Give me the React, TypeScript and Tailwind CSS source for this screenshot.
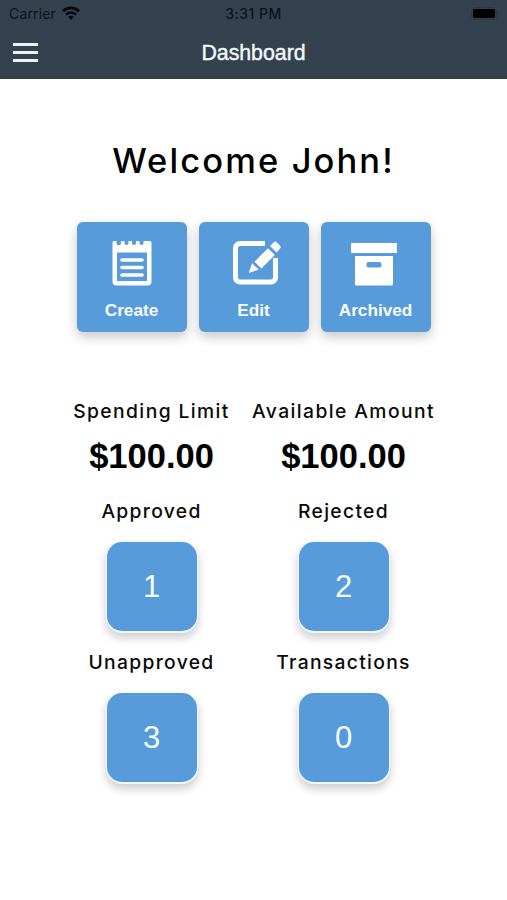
import type { ReactNode } from "react";

function StatusBar() {
  return (
    <div className="grid h-7 grid-cols-3 items-center font-['Inter',sans-serif] text-[14px] leading-7 text-[#0b131b]">
      <div className="flex items-center gap-[6px] pl-[9px]">
        <span className="tracking-[0.15px]">Carrier</span>
        <svg className="-mt-[2px]" width="18" height="14" viewBox="0 0 18 14" fill="none" stroke="#05090d" strokeWidth="2.6">
          <path d="M1 5.2a11.4 11.4 0 0 1 16 0" />
          <path d="M4 8.6a7.1 7.1 0 0 1 10 0" />
          <path d="M6.3 11.1a3.8 3.8 0 0 1 5.4 0L9 13.8z" fill="#05090d" stroke="none" />
        </svg>
      </div>
      <div className="text-center font-medium tracking-[0.45px]">3:31 PM</div>
      <div className="flex items-center justify-end pr-[8px]">
        <div className="-mt-[2px] h-[13px] w-[26px] rounded-[4px] border border-[#2b3843] p-px">
          <div className="h-full w-full rounded-[2px] bg-black" />
        </div>
        <div className="-mt-[2px] ml-px h-1 w-[1px] rounded-r bg-[#2b3843]" />
      </div>
    </div>
  );
}

function NavBar() {
  return (
    <div className="grid h-[51px] grid-cols-[60px_1fr_60px] items-center">
      <button aria-label="Menu" className="ml-[13px] -mt-[2px] flex w-[25px] flex-col gap-[5px]">
        <span className="h-[3px] bg-[#eff2f4]" />
        <span className="h-[3px] bg-[#eff2f4]" />
        <span className="h-[3px] bg-[#eff2f4]" />
      </button>
      <h1 className="text-center text-[21.3px] text-[#f3f8fc] [-webkit-text-stroke:0.4px_#f3f8fc]">Dashboard</h1>
    </div>
  );
}

function CreateIcon() {
  return (
    <svg width="40" height="46" viewBox="0 0 40 46" fill="white">
      <path
        fillRule="evenodd"
        d="M.5 2.500Q.5 1 2 1h2.500v2a2 2 0 0 0 4.500 0V1h3.500v2a2 2 0 0 0 4 0V1H20v2a2 2 0 0 0 4 0V1h3.500v2a2 2 0 0 0 4 0V1H37.500Q39.500 1 39.500 2.500V41.500a4 4 0 0 1-4 4h-31a4 4 0 0 1-4-4zM5 12.500v28.500h30V12.500z"
      />
      <path d="M10 20h20M10 27.500h20M10 35h20" stroke="white" strokeWidth="3.600" strokeLinecap="round" />
    </svg>
  );
}

function EditIcon() {
  return (
    <svg className="ml-[6px]" width="50" height="46" viewBox="0 0 50 46" fill="white">
      <path d="M33 3.500H8a4.500 4.500 0 0 0-4.500 4.500v30A4.500 4.500 0 0 0 8 42h31a4.500 4.500 0 0 0 4.500-4.500V18" fill="none" stroke="white" strokeWidth="5" />
      <path d="M40-1 13 32h14l22-25z" fill="#579bdb" />
      <path d="M16.800 33 20 23.300l6.700 6.200z" />
      <path d="m22.500 21.700 13.500-13.500 6.900 6.900L29.400 28.600z" />
      <path d="m38 6 3.800-3.800q1.400-1.400 2.800 0l3.500 3.500q1.400 1.400 0 2.800l-3.500 4z" />
    </svg>
  );
}

function ArchiveIcon() {
  return (
    <svg className="mr-[4px]" width="48" height="46" viewBox="0 0 48 46" fill="white">
      <rect x="1" y="3" width="46" height="10" rx="0.800" />
      <path
        fillRule="evenodd"
        d="M5 16h38v28a1.500 1.500 0 0 1-1.500 1.500h-35A1.500 1.500 0 0 1 5 44zM18.500 22a2 2 0 0 0-2 2v1.500a2 2 0 0 0 2 2h11a2 2 0 0 0 2-2V24a2 2 0 0 0-2-2z"
      />
    </svg>
  );
}

function ActionTile({ label, children }: { label: string; children: ReactNode }) {
  return (
    <button className="flex h-[110px] w-[110px] flex-col items-center rounded-[6px] bg-[#579bdb] pt-[18px] shadow-[0_5px_12px_rgba(0,0,0,0.22)]">
      <span className="flex h-[46px] items-center">{children}</span>
      <span className="mt-[13px] text-[17.2px] leading-[22px] font-bold text-[#f8fcff]">{label}</span>
    </button>
  );
}

function Label({ children, className = "" }: { children: ReactNode; className?: string }) {
  return (
    <div className={`font-['Inter',sans-serif] text-[19.3px] leading-6 font-medium whitespace-nowrap text-[#0a0a0a] ${className}`}>
      {children}
    </div>
  );
}

function Amount({ children }: { children: ReactNode }) {
  return <div className="mt-[13px] text-[34.5px] leading-10 font-bold text-black">{children}</div>;
}

function CountTile({ value }: { value: number }) {
  return (
    <div className="mt-[18px] flex h-[92px] w-[92px] items-center justify-center rounded-[16px] bg-[#f0f7fd] p-px pb-[2px] shadow-[0_5px_10px_rgba(0,0,0,0.2)]">
      <div className="flex h-full w-full items-center justify-center rounded-[15px] bg-[#579bdb] pt-px text-[31px] text-[#f5fbff]">
        {value}
      </div>
    </div>
  );
}

export default function App() {
  return (
    <div className="min-h-[900px] w-full bg-white font-['Liberation_Sans',Arial,sans-serif]">
      <header className="h-[79px] bg-[#34424f]">
        <StatusBar />
        <NavBar />
      </header>
      <main className="flex flex-col items-center">
        <h2 className="mt-[61px] font-['Inter',sans-serif] text-[34.5px] leading-[42px] font-medium tracking-[2.1px] whitespace-nowrap text-black">
          Welcome John!
        </h2>
        <div className="mt-[40px] flex gap-3">
          <ActionTile label="Create"><CreateIcon /></ActionTile>
          <ActionTile label="Edit"><EditIcon /></ActionTile>
          <ActionTile label="Archived"><ArchiveIcon /></ActionTile>
        </div>
        <div className="mt-[67px] mr-3 grid grid-cols-[192px_192px] justify-center">
          <section className="flex flex-col items-center">
            <Label className="tracking-[1.4px]">Spending Limit</Label>
            <Amount>$100.00</Amount>
            <Label className="mt-[23px] tracking-[1.3px]">Approved</Label>
            <CountTile value={1} />
            <Label className="mt-[17px] tracking-[1.3px]">Unapproved</Label>
            <CountTile value={3} />
          </section>
          <section className="flex flex-col items-center">
            <Label className="tracking-[1.4px]">Available Amount</Label>
            <Amount>$100.00</Amount>
            <Label className="mt-[23px] tracking-[1.3px]">Rejected</Label>
            <CountTile value={2} />
            <Label className="mt-[17px] tracking-[1.3px]">Transactions</Label>
            <CountTile value={0} />
          </section>
        </div>
      </main>
    </div>
  );
}
